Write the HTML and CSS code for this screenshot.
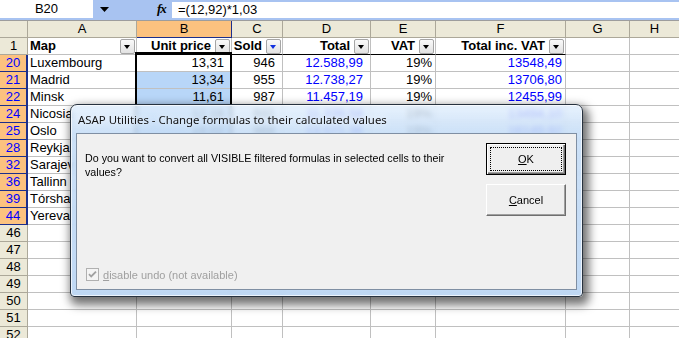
FILE: index.html
```html
<!DOCTYPE html>
<html>
<head>
<meta charset="utf-8">
<link rel="stylesheet" href="styles.css">
</head>
<body>
<div class="app">
  <div class="formula-bar">
    <div class="namebox">B20</div>
    <div class="name-drop"><svg width="9" height="5" viewBox="0 0 9 5"><path d="M0 0H9L4.5 5Z" fill="#000"/></svg></div>
    <div class="fx">fx</div>
    <div class="formula">=(12,92)*1,03</div>
  </div>
  <div class="sheet">
    <div class="row colhdr">
      <div class="rh"></div><div class="c a">A</div><div class="c b selh">B</div><div class="c cc">C</div><div class="c d">D</div><div class="c e">E</div><div class="c f">F</div><div class="c g">G</div><div class="c h">H</div>
    </div>
    <div class="row hdr1">
      <div class="rh">1</div>
      <div class="c a hl"><span>Map</span><i class="dd"></i></div>
      <div class="c b hr ul"><span>Unit price</span><i class="dd"></i></div>
      <div class="c cc hr ul"><span>Sold</span><i class="dd on"></i></div>
      <div class="c d hr ul"><span>Total</span><i class="dd"></i></div>
      <div class="c e hr ul"><span>VAT</span><i class="dd"></i></div>
      <div class="c f hr ul"><span>Total inc. VAT</span><i class="dd"></i></div>
      <div class="c g"></div><div class="c h"></div>
    </div>
    <div class="row sel"><div class="rh">20</div><div class="c a">Luxembourg</div><div class="c b n7">13,31</div><div class="c cc n7">946</div><div class="c d n7 blue">12.588,99</div><div class="c e n3">19%</div><div class="c f n3 blue">13548,49</div><div class="c g"></div><div class="c h"></div></div>
    <div class="row sel"><div class="rh">21</div><div class="c a">Madrid</div><div class="c b n7 hi">13,34</div><div class="c cc n7">955</div><div class="c d n7 blue">12.738,27</div><div class="c e n3">19%</div><div class="c f n3 blue">13706,80</div><div class="c g"></div><div class="c h"></div></div>
    <div class="row sel"><div class="rh">22</div><div class="c a">Minsk</div><div class="c b n7 hi">11,61</div><div class="c cc n7">987</div><div class="c d n7 blue">11.457,19</div><div class="c e n3">19%</div><div class="c f n3 blue">12455,99</div><div class="c g"></div><div class="c h"></div></div>
    <div class="row sel"><div class="rh">24</div><div class="c a">Nicosia</div><div class="c b n7 hi">12,18</div><div class="c cc n7">931</div><div class="c d n7 blue">11.339,58</div><div class="c e n3">19%</div><div class="c f n3 blue">13494,10</div><div class="c g"></div><div class="c h"></div></div>
    <div class="row sel"><div class="rh">25</div><div class="c a">Oslo</div><div class="c b n7 hi">14,02</div><div class="c cc n7">968</div><div class="c d n7 blue">13.571,36</div><div class="c e n3">19%</div><div class="c f n3 blue">16149,92</div><div class="c g"></div><div class="c h"></div></div>
    <div class="row sel"><div class="rh">28</div><div class="c a">Reykja</div><div class="c b hi"></div><div class="c cc"></div><div class="c d"></div><div class="c e"></div><div class="c f"></div><div class="c g"></div><div class="c h"></div></div>
    <div class="row sel"><div class="rh">32</div><div class="c a">Sarajev</div><div class="c b hi"></div><div class="c cc"></div><div class="c d"></div><div class="c e"></div><div class="c f"></div><div class="c g"></div><div class="c h"></div></div>
    <div class="row sel"><div class="rh">36</div><div class="c a">Tallinn</div><div class="c b hi"></div><div class="c cc"></div><div class="c d"></div><div class="c e"></div><div class="c f"></div><div class="c g"></div><div class="c h"></div></div>
    <div class="row sel"><div class="rh">39</div><div class="c a">Tórsha</div><div class="c b hi"></div><div class="c cc"></div><div class="c d"></div><div class="c e"></div><div class="c f"></div><div class="c g"></div><div class="c h"></div></div>
    <div class="row sel"><div class="rh">44</div><div class="c a">Yereva</div><div class="c b hi"></div><div class="c cc"></div><div class="c d"></div><div class="c e"></div><div class="c f"></div><div class="c g"></div><div class="c h"></div></div>
    <div class="row"><div class="rh">46</div><div class="c a"></div><div class="c b"></div><div class="c cc"></div><div class="c d"></div><div class="c e"></div><div class="c f"></div><div class="c g"></div><div class="c h"></div></div>
    <div class="row"><div class="rh">47</div><div class="c a"></div><div class="c b"></div><div class="c cc"></div><div class="c d"></div><div class="c e"></div><div class="c f"></div><div class="c g"></div><div class="c h"></div></div>
    <div class="row"><div class="rh">48</div><div class="c a"></div><div class="c b"></div><div class="c cc"></div><div class="c d"></div><div class="c e"></div><div class="c f"></div><div class="c g"></div><div class="c h"></div></div>
    <div class="row"><div class="rh">49</div><div class="c a"></div><div class="c b"></div><div class="c cc"></div><div class="c d"></div><div class="c e"></div><div class="c f"></div><div class="c g"></div><div class="c h"></div></div>
    <div class="row"><div class="rh">50</div><div class="c a"></div><div class="c b"></div><div class="c cc"></div><div class="c d"></div><div class="c e"></div><div class="c f"></div><div class="c g"></div><div class="c h"></div></div>
    <div class="row"><div class="rh">51</div><div class="c a"></div><div class="c b"></div><div class="c cc"></div><div class="c d"></div><div class="c e"></div><div class="c f"></div><div class="c g"></div><div class="c h"></div></div>
    <div class="row"><div class="rh">52</div><div class="c a"></div><div class="c b"></div><div class="c cc"></div><div class="c d"></div><div class="c e"></div><div class="c f"></div><div class="c g"></div><div class="c h"></div></div>
    <div class="selection"></div>
  </div>

  <div class="dialog">
    <div class="dialog-title">ASAP Utilities - Change formulas to their calculated values</div>
    <div class="dialog-client">
      <div class="msg-col">
        <p class="msg">Do you want to convert all VISIBLE filtered formulas in selected cells to their values?</p>
        <label class="chk">
          <svg width="13" height="13" viewBox="0 0 13 13"><rect x="0.5" y="0.5" width="12" height="12" fill="#f4f4f4" stroke="#b0b0b0"/><path d="M3 6.2L5.2 8.5L10 3.6" fill="none" stroke="#a0a0a0" stroke-width="1.8"/></svg>
          <span><u>d</u>isable undo (not available)</span>
        </label>
      </div>
      <div class="btn-col">
        <div class="btn def"><span class="focus"><u>O</u>K</span></div>
        <div class="btn"><span><u>C</u>ancel</span></div>
      </div>
    </div>
  </div>
</div>
</body>
</html>
```
FILE: styles.css
```css
html, body {
  margin: 0;
  padding: 0;
  background: #fff;
  overflow: hidden;
}
.app {
  position: relative;
  width: 679px;
  height: 338px;
  overflow: hidden;
  font-family: "Liberation Sans", Arial, sans-serif;
  font-size: 13px;
  color: #000;
}

/* formula bar */
.formula-bar {
  display: flex;
  height: 20px;
  box-sizing: border-box;
  padding-bottom: 2px;
  background: #a8c3f1;
}
.namebox {
  width: 93px;
  background: #fff;
  text-align: center;
  line-height: 18px;
}
.name-drop {
  width: 56px;
  display: flex;
  align-items: center;
  padding-left: 7px;
  box-sizing: border-box;
}
.fx {
  width: 23px;
  padding-left: 8px;
  box-sizing: border-box;
  font-family: "Liberation Serif", serif;
  font-style: italic;
  font-weight: bold;
  font-size: 13px;
  line-height: 18px;
  letter-spacing: -1px;
}
.formula {
  flex: 1;
  background: #fff;
  margin-top: 2px;
  padding-left: 6px;
  line-height: 16px;
}

/* sheet */
.sheet {
  position: relative;
  border-top: 1px solid #9d9d9d;
}
.row {
  display: flex;
  height: 17px;
}
.row > div {
  box-sizing: border-box;
  height: 17px;
  border-right: 1px solid #c0c0c0;
  border-bottom: 1px solid #c0c0c0;
  line-height: 16px;
  white-space: nowrap;
  overflow: hidden;
  flex: none;
}
.rh {
  width: 28px;
  background: #ece9d8;
  text-align: center;
  border-right-color: #aca899 !important;
  border-bottom-color: #aca899 !important;
}
.a { width: 109px; padding-left: 2px; }
.b { width: 95px; }
.cc { width: 51px; }
.d { width: 88px; }
.e { width: 65px; }
.f { width: 130px; }
.g { width: 64px; }
.h { flex: 1 !important; border-right: none !important; }

.colhdr > div {
  background: #ece9d8;
  border-right-color: #aca899;
  border-bottom-color: #aca899;
  text-align: center;
  padding: 0;
}
.colhdr > .selh {
  background: #fcc27f;
  border-right-color: #1c2f8c;
  border-bottom-color: #1c2f8c;
}

.hdr1 .hl, .hdr1 .hr {
  display: flex;
  align-items: center;
  font-weight: bold;
  padding-right: 1px;
}
.hdr1 .hl { justify-content: space-between; }
.hdr1 .hr { justify-content: flex-end; gap: 4px; }
.hdr1 .ul { border-bottom-color: #000; }
.dd {
  display: block;
  width: 15px;
  height: 15px;
  box-sizing: border-box;
  border: 1px solid #a5a5a5;
  border-radius: 2px;
  background: linear-gradient(#fafafa, #e2e2e2);
  position: relative;
  flex: none;
}
.dd::after {
  content: "";
  position: absolute;
  left: 3px;
  top: 5px;
  border-left: 3.5px solid transparent;
  border-right: 3.5px solid transparent;
  border-top: 4px solid #000;
}
.dd.on::after { border-top-color: #1030e0; }

.sel .rh {
  background: #fcc27f;
  color: #0000ff;
  border-right: 2px solid #1c2f8c !important;
  border-bottom-color: #1c2f8c !important;
}
.n7 { text-align: right; padding-right: 7px; }
.n3 { text-align: right; padding-right: 3px; }
.blue { color: #0000ff; }
.hi { background: #b8d6f8; }

.selection {
  position: absolute;
  left: 135px;
  top: 31px;
  width: 97px;
  height: 189px;
  box-sizing: border-box;
  border: 2px solid #000;
  pointer-events: none;
}

/* dialog */
.dialog {
  position: absolute;
  left: 70px;
  top: 104px;
  width: 513px;
  height: 193px;
  box-sizing: border-box;
  border: 1px solid #27323f;
  border-radius: 7px 7px 4px 4px;
  background: linear-gradient(rgba(226, 239, 253, 0.8), rgba(196, 220, 246, 0.86) 28px, rgba(186, 213, 243, 0.92));
  backdrop-filter: blur(2.5px);
  box-shadow: 3px 5px 10px 3px rgba(0, 0, 0, 0.55), inset 0 0 0 1px rgba(255, 255, 255, 0.7);
  display: flex;
  flex-direction: column;
  padding: 0 5px 6px 5px;
}
.dialog-title {
  height: 28px;
  line-height: 30px;
  padding-left: 2px;
  font-family: "Noto Sans", "Liberation Sans", sans-serif;
  font-size: 11.4px;
  color: #111;
  text-shadow: 0 0 6px rgba(255, 255, 255, 0.9);
}
.dialog-client {
  flex: 1;
  display: flex;
  background: #f0f0f0;
  border: 1px solid #7f8fa3;
  font-size: 10.7px;
}
.msg-col {
  flex: 1;
  display: flex;
  flex-direction: column;
  justify-content: space-between;
  padding: 17px 0 8px 8px;
}
.msg {
  margin: 0;
  line-height: 14px;
  width: 380px;
}
.chk {
  display: flex;
  align-items: center;
  gap: 4px;
  padding-left: 1px;
  color: #a0a0a0;
  font-size: 11px;
}
.btn-col {
  width: 80px;
  margin-right: 10px;
  padding-top: 9px;
  display: flex;
  flex-direction: column;
  gap: 9px;
  font-size: 11px;
}
.btn {
  height: 32px;
  box-sizing: border-box;
  background: #efefef;
  border: 1px solid;
  border-color: #fff #6f6f6f #6f6f6f #fff;
  box-shadow: inset -1px -1px 0 #a0a0a0;
  display: flex;
  align-items: center;
  justify-content: center;
}
.btn.def {
  border: 1px solid #000;
  box-shadow: inset 1px 1px 0 #fff, inset -1px -1px 0 #6f6f6f, inset -2px -2px 0 #a0a0a0;
  padding: 3px;
}
.btn.def .focus {
  flex: 1;
  align-self: stretch;
  border: 1px dotted #000;
  display: flex;
  align-items: center;
  justify-content: center;
}
```
